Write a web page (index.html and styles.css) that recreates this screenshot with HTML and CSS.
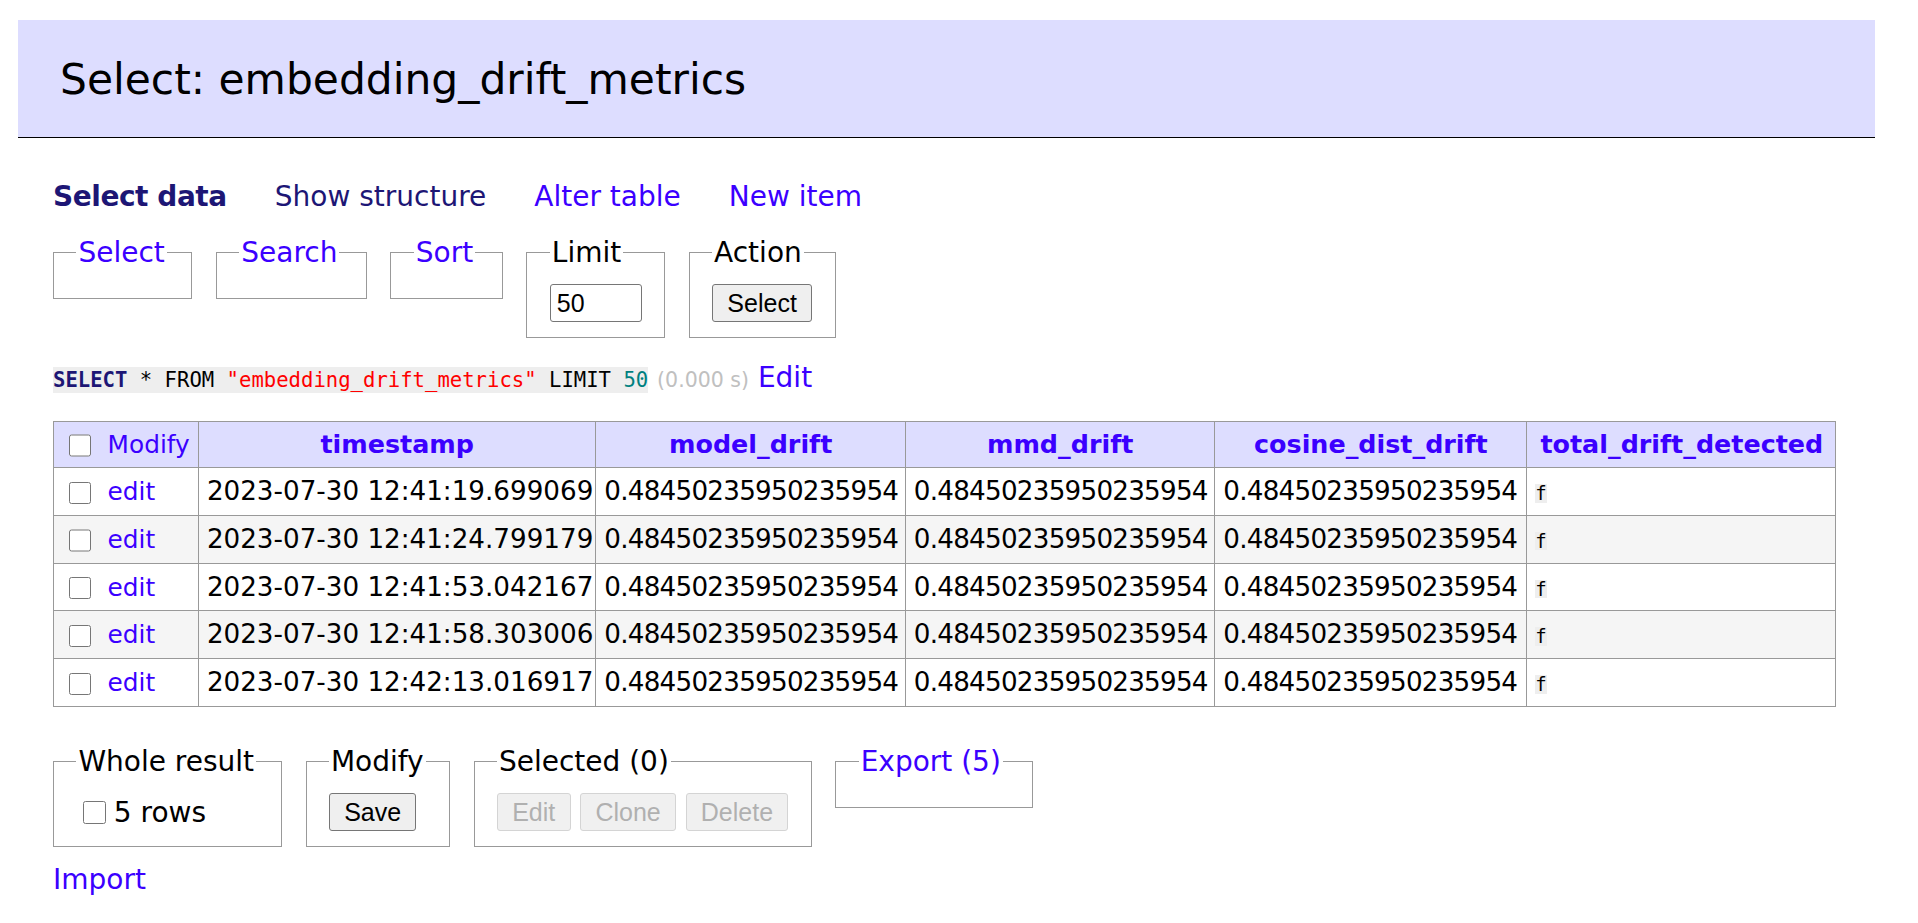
FILE: index.html
```html
<!DOCTYPE html>
<html lang="en">
<head>
<meta charset="utf-8">
<title>Select: embedding_drift_metrics</title>
<link rel="stylesheet" href="styles.css">
</head>
<body>
<div class="content">
  <h2 class="title">Select: embedding_drift_metrics</h2>

  <p class="links">
    <a class="active" href="#">Select data</a>
    <a class="visited" href="#">Show structure</a>
    <a href="#">Alter table</a>
    <a href="#">New item</a>
  </p>

  <form class="select-form">
    <fieldset class="fs fs-select"><legend><a href="#">Select</a></legend></fieldset>
    <fieldset class="fs fs-search"><legend><a href="#">Search</a></legend></fieldset>
    <fieldset class="fs fs-sort"><legend><a href="#">Sort</a></legend></fieldset>
    <fieldset class="fs"><legend>Limit</legend>
      <div class="fs-body"><input type="text" class="limit" value="50"></div>
    </fieldset>
    <fieldset class="fs"><legend>Action</legend>
      <div class="fs-body"><button type="button" class="btn">Select</button></div>
    </fieldset>
  </form>

  <p class="sql"><code><span class="kw">SELECT</span> * FROM <span class="str">"embedding_drift_metrics"</span> LIMIT <span class="num">50</span></code> <span class="time">(0.000 s)</span> <a href="#">Edit</a></p>

  <table class="data">
    <colgroup>
      <col class="c1"><col class="c2"><col class="c3"><col class="c4"><col class="c5"><col class="c6">
    </colgroup>
    <thead>
      <tr>
        <td><input type="checkbox" class="chk"> <a class="row-link" href="#">Modify</a></td>
        <th><a href="#">timestamp</a></th>
        <th><a href="#">model_drift</a></th>
        <th><a href="#">mmd_drift</a></th>
        <th><a href="#">cosine_dist_drift</a></th>
        <th><a href="#">total_drift_detected</a></th>
      </tr>
    </thead>
    <tbody>
      <tr>
        <td><input type="checkbox" class="chk"> <a class="row-link" href="#">edit</a></td>
        <td>2023-07-30 12:41:19.699069</td>
        <td class="n">0.48450235950235954</td>
        <td class="n">0.48450235950235954</td>
        <td class="n">0.48450235950235954</td>
        <td><code>f</code></td>
      </tr>
      <tr>
        <td><input type="checkbox" class="chk"> <a class="row-link" href="#">edit</a></td>
        <td>2023-07-30 12:41:24.799179</td>
        <td class="n">0.48450235950235954</td>
        <td class="n">0.48450235950235954</td>
        <td class="n">0.48450235950235954</td>
        <td><code>f</code></td>
      </tr>
      <tr>
        <td><input type="checkbox" class="chk"> <a class="row-link" href="#">edit</a></td>
        <td>2023-07-30 12:41:53.042167</td>
        <td class="n">0.48450235950235954</td>
        <td class="n">0.48450235950235954</td>
        <td class="n">0.48450235950235954</td>
        <td><code>f</code></td>
      </tr>
      <tr>
        <td><input type="checkbox" class="chk"> <a class="row-link" href="#">edit</a></td>
        <td>2023-07-30 12:41:58.303006</td>
        <td class="n">0.48450235950235954</td>
        <td class="n">0.48450235950235954</td>
        <td class="n">0.48450235950235954</td>
        <td><code>f</code></td>
      </tr>
      <tr>
        <td><input type="checkbox" class="chk"> <a class="row-link" href="#">edit</a></td>
        <td>2023-07-30 12:42:13.016917</td>
        <td class="n">0.48450235950235954</td>
        <td class="n">0.48450235950235954</td>
        <td class="n">0.48450235950235954</td>
        <td><code>f</code></td>
      </tr>
    </tbody>
  </table>

  <form class="bottom-form">
    <fieldset class="fs fs-whole"><legend>Whole result</legend>
      <div class="fs-body"><label class="rows"><input type="checkbox" class="chk">5 rows</label></div>
    </fieldset>
    <fieldset class="fs fs-modify"><legend>Modify</legend>
      <div class="fs-body"><button type="button" class="btn">Save</button></div>
    </fieldset>
    <fieldset class="fs"><legend>Selected (0)</legend>
      <div class="fs-body">
        <button type="button" class="btn" disabled>Edit</button>
        <button type="button" class="btn" disabled>Clone</button>
        <button type="button" class="btn" disabled>Delete</button>
      </div>
    </fieldset>
    <fieldset class="fs fs-export"><legend><a href="#">Export (5)</a></legend></fieldset>
  </form>

  <p class="import"><a href="#">Import</a></p>
</div>
</body>
</html>
```

FILE: styles.css
```css
* {
  box-sizing: border-box;
}

html,
body {
  margin: 0;
  padding: 0;
  background: #fff;
}

body {
  font-family: "DejaVu Sans", Verdana, sans-serif;
  font-size: 28px;
  line-height: 1.25;
  color: #000;
}

a {
  color: #3b00ff;
  text-decoration: none;
}

.content {
  width: fit-content;
  padding: 20px 0 20px 53px;
}

.title {
  margin: 0 0 41px -35px;
  padding: 34px 42px 30px;
  font-size: 42.4px;
  line-height: 52.5px;
  font-weight: normal;
  background: #ddf;
  border-bottom: 1px solid #000;
}

.links {
  margin: 0;
  display: flex;
  gap: 48px;
}

.links .active {
  color: #1d1675;
  font-weight: bold;
  letter-spacing: -0.45px;
}

.links .visited {
  color: #1d1675;
}

.select-form,
.bottom-form {
  display: flex;
  align-items: flex-start;
  gap: 23.5px;
  margin: 21px 0 0;
}

.bottom-form {
  margin-top: 37px;
}

.fs {
  margin: 0;
  padding: 14px 22.4px;
  border: 1px solid #999;
  min-width: 0;
}

.fs legend {
  padding: 0 2px;
  line-height: 35px;
}

.fs-select {
  width: 139.4px;
}

.fs-search {
  width: 151px;
}

.fs-sort {
  width: 112.5px;
}

.fs-whole {
  width: 229px;
}

.fs-modify {
  width: 144.5px;
}

.fs-export {
  width: 198px;
}

.fs-body {
  display: flex;
  align-items: center;
  gap: 9.5px;
  min-height: 39px;
}

.limit {
  width: 92px;
  height: 38px;
  padding: 0 6px;
  border: 1px solid #767676;
  border-radius: 3px;
  font: 25px "Liberation Sans", Arial, sans-serif;
  color: #000;
  background: #fff;
}

.btn {
  height: 38px;
  padding: 0 14.3px;
  border: 1px solid #767676;
  border-radius: 3px;
  background: #efefef;
  font: 25px "Liberation Sans", Arial, sans-serif;
  color: #000;
}

.btn:disabled {
  color: #b0b0b0;
  border-color: #d4d4d4;
  background: #f0f0f0;
}

.rows {
  display: flex;
  align-items: center;
}

.sql {
  margin: 22px 0 0;
}

.sql code {
  font-family: "DejaVu Sans Mono", monospace;
  font-size: 20.6px;
  background: #eee;
  padding: 1px 0;
}

.kw {
  color: #1d1675;
  font-weight: bold;
}

.str {
  color: #f00;
}

.num {
  color: #008080;
}

.time {
  color: silver;
  font-size: 20.5px;
}

.data {
  margin: 26.2px 39px 0 0;
  border-collapse: collapse;
  table-layout: fixed;
  width: 1782px;
  font-size: 26.2px;
  line-height: 32.75px;
}

.c1 { width: 145px; }
.c2 { width: 397.4px; }
.c3 { width: 309.5px; }
.c4 { width: 309.5px; }
.c5 { width: 312px; }
.c6 { width: 308.6px; }

.data td,
.data th {
  border: 1px solid #999;
  padding: 7px 7.9px;
  white-space: nowrap;
  text-align: left;
  font-weight: normal;
}

.data thead td,
.data thead th {
  background: #ddf;
  padding-top: 6.4px;
  padding-bottom: 6.4px;
}

.data thead th {
  text-align: center;
  font-weight: bold;
  font-size: 25.4px;
  padding-left: 13px;
  padding-right: 13px;
}

.data .row-link {
  font-size: 24.8px;
  line-height: 1;
}

.data .n {
  letter-spacing: -0.75px;
}

.data tbody tr:nth-child(2n) {
  background: #f5f5f5;
}

.data code {
  display: inline-block;
  font-family: "DejaVu Sans Mono", monospace;
  font-size: 19px;
  line-height: 18.4px;
  background: #eee;
}

.chk {
  width: 22.4px;
  height: 22.4px;
  margin: 0 8px 0 7px;
  vertical-align: middle;
}

.import {
  margin: 15.5px 0 0;
}
```
